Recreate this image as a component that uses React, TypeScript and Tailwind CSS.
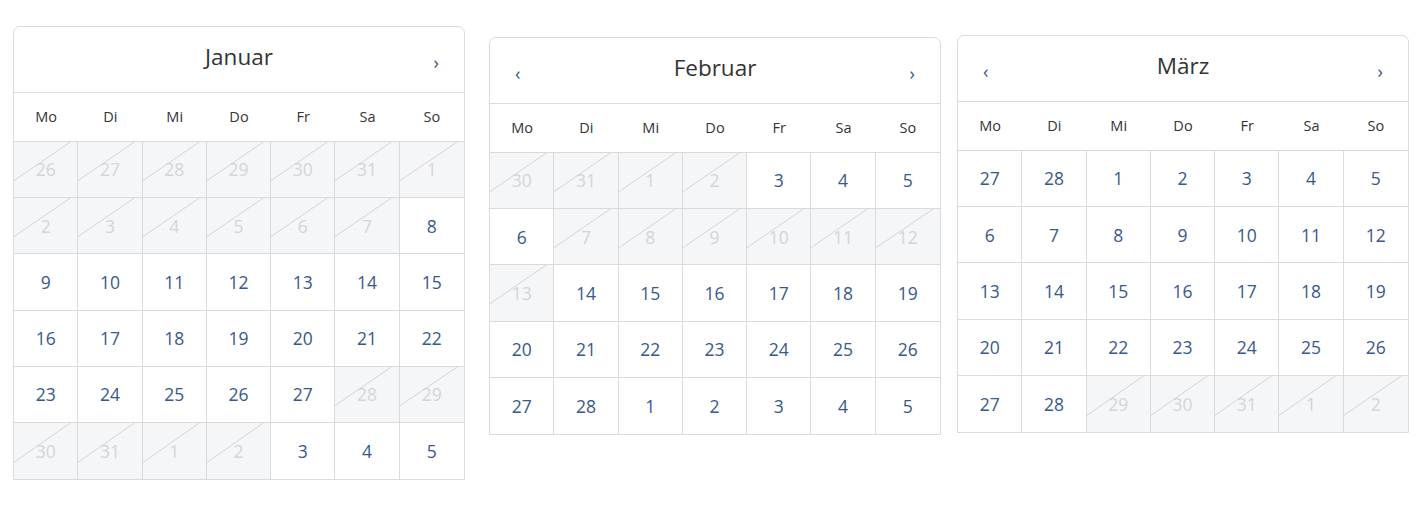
import React from "react";

type Day = { n: number; off: boolean };

const WD = ["Mo", "Di", "Mi", "Do", "Fr", "Sa", "So"];

function range(a: number, b: number, off: boolean): Day[] {
  const r: Day[] = [];
  for (let i = a; i <= b; i++) r.push({ n: i, off });
  return r;
}

const jan: Day[] = [
  ...range(26, 31, true),
  ...range(1, 7, true),
  ...range(8, 27, false),
  ...range(28, 31, true),
  ...range(1, 2, true),
  ...range(3, 5, false),
];

const feb: Day[] = [
  ...range(30, 31, true),
  ...range(1, 2, true),
  ...range(3, 6, false),
  ...range(7, 13, true),
  ...range(14, 28, false),
  ...range(1, 5, false),
];

const mar: Day[] = [
  ...range(27, 28, false),
  ...range(1, 28, false),
  ...range(29, 31, true),
  ...range(1, 2, true),
];

function Cell({ d, col, lastRow }: { d: Day; col: number; lastRow: boolean }) {
  return (
    <div
      className={
        "relative h-[56.2px] flex items-center justify-center text-[17.5px] " +
        (col < 6 ? "border-r border-[#dadada] " : "") +
        (lastRow ? "" : "border-b border-[#dadada] ") +
        (d.off ? "bg-[#f5f6f8] text-[#d3d5d9]" : "bg-white text-[#37598a]")
      }
    >
      {d.off && (
        <svg className="absolute inset-0 w-full h-full" preserveAspectRatio="none" viewBox="0 0 100 100">
          <line x1="0" y1="70" x2="89" y2="0" stroke="#d4d4d6" strokeWidth="1" vectorEffect="non-scaling-stroke" />
        </svg>
      )}
      <span className="relative">{d.n}</span>
    </div>
  );
}

function Calendar({ title, days, prev, next, className }: { title: string; days: Day[]; prev: boolean; next: boolean; className?: string }) {
  const rows = days.length / 7;
  return (
    <div className={"w-[452px] border border-[#dadada] rounded-t-[7px] bg-white " + (className ?? "")}>
      <div className="h-[66px] border-b border-[#dadada] flex items-center px-[25px]">
        <div className="w-[20px] text-[18px] text-[#37598a] pt-[6px]">{prev ? "‹" : ""}</div>
        <div className="flex-1 text-center text-[22.5px] text-[#333] pb-[5px]">{title}</div>
        <div className="w-[20px] text-right text-[18px] text-[#37598a] pt-[6px]">{next ? "›" : ""}</div>
      </div>
      <div className="grid grid-cols-7 h-[49px] border-b border-[#dadada] items-center">
        {WD.map((w) => (
          <div key={w} className="text-center text-[14.5px] text-[#333]">
            {w}
          </div>
        ))}
      </div>
      <div className="grid grid-cols-7">
        {days.map((d, i) => (
          <Cell key={i} d={d} col={i % 7} lastRow={Math.floor(i / 7) === rows - 1} />
        ))}
      </div>
    </div>
  );
}

export default function App() {
  return (
    <div className="w-[1428px] h-[505px] bg-white flex items-start pl-[13px] pt-[26px]" style={{ fontFamily: '"Open Sans", sans-serif' }}>
      <Calendar title="Januar" days={jan} prev={false} next={true} />
      <Calendar title="Februar" days={feb} prev={true} next={true} className="ml-[24px] mt-[11px]" />
      <Calendar title="März" days={mar} prev={true} next={true} className="ml-[16px] mt-[9px]" />
    </div>
  );
}
